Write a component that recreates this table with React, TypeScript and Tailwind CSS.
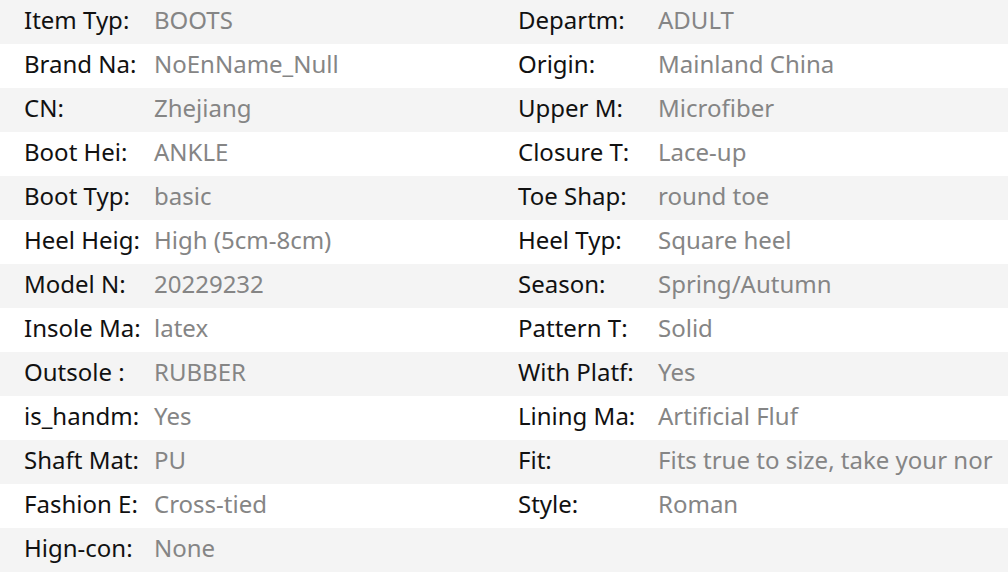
import React from "react";

const rows: [string, string, string, string][] = [
  ["Item Typ:", "BOOTS", "Departm:", "ADULT"],
  ["Brand Na:", "NoEnName_Null", "Origin:", "Mainland China"],
  ["CN:", "Zhejiang", "Upper M:", "Microfiber"],
  ["Boot Hei:", "ANKLE", "Closure T:", "Lace-up"],
  ["Boot Typ:", "basic", "Toe Shap:", "round toe"],
  ["Heel Heig:", "High (5cm-8cm)", "Heel Typ:", "Square heel"],
  ["Model N:", "20229232", "Season:", "Spring/Autumn"],
  ["Insole Ma:", "latex", "Pattern T:", "Solid"],
  ["Outsole :", "RUBBER", "With Platf:", "Yes"],
  ["is_handm:", "Yes", "Lining Ma:", "Artificial Fluf"],
  ["Shaft Mat:", "PU", "Fit:", "Fits true to size, take your nor"],
  ["Fashion E:", "Cross-tied", "Style:", "Roman"],
  ["Hign-con:", "None", "", ""],
];

export default function App() {
  return (
    <div
      className="w-[1008px] h-[572px] overflow-hidden bg-white"
      style={{ fontFamily: '"Noto Sans", "Open Sans", sans-serif' }}
    >
      {rows.map((r, i) => (
        <div
          key={i}
          className={
            "flex items-center h-[44px] pl-[24px] pb-[4px] text-[24px] leading-[32px] whitespace-nowrap " +
            (i % 2 === 0 ? "bg-[#f4f4f4]" : "bg-white")
          }
        >
          <div className="w-[130px] shrink-0 text-[#111]">{r[0]}</div>
          <div className="w-[364px] shrink-0 text-[#858585]">{r[1]}</div>
          <div className="w-[140px] shrink-0 text-[#111]">{r[2]}</div>
          <div className="flex-1 text-[#858585]">{r[3]}</div>
        </div>
      ))}
    </div>
  );
}
